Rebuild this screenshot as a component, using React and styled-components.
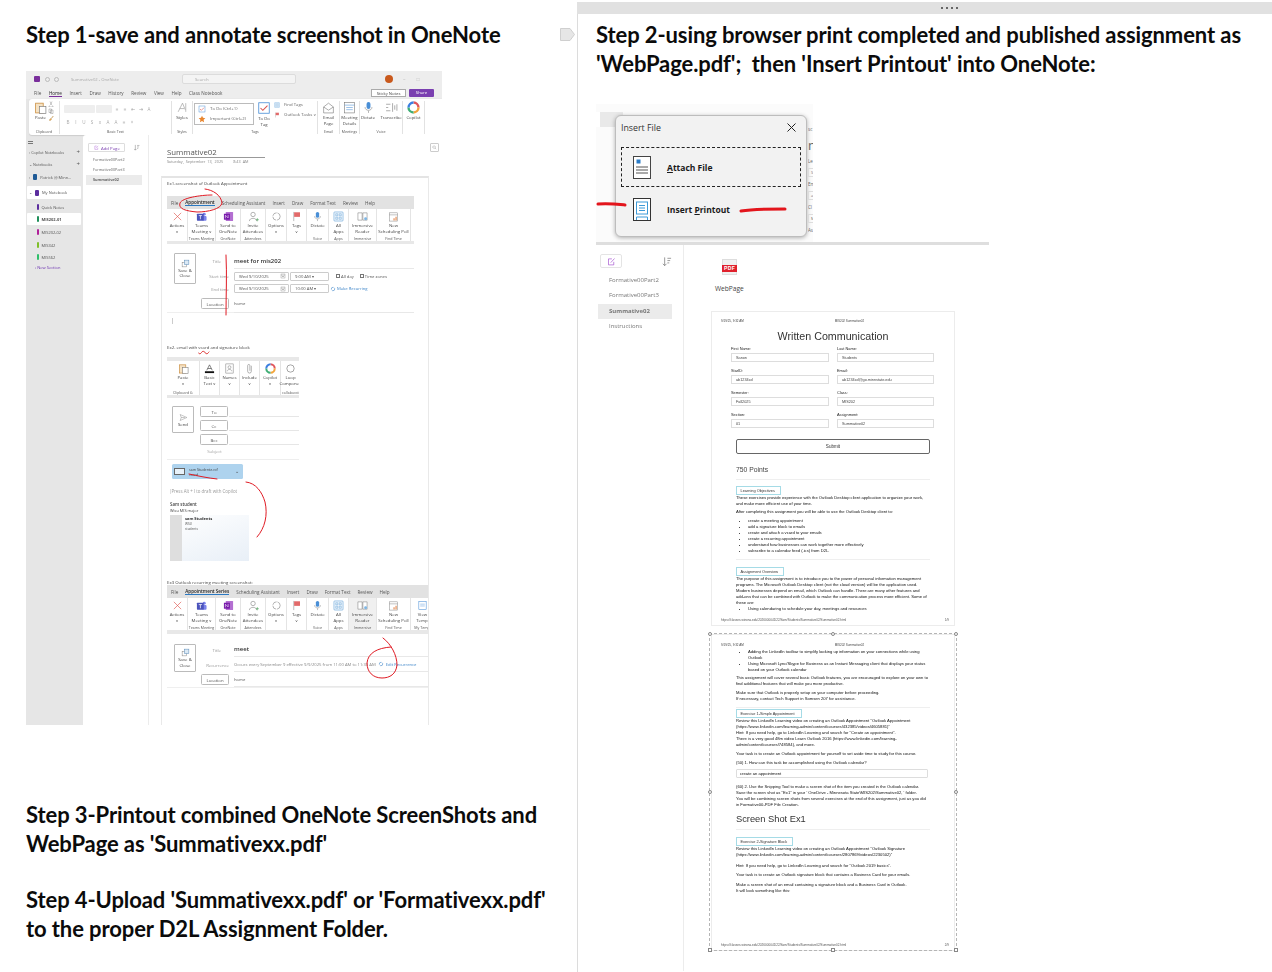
import React from "react";
import styled, { createGlobalStyle } from "styled-components";

const GlobalStyle = createGlobalStyle`
  html, body {
    margin: 0;
    width: 1272px;
    height: 972px;
    overflow: hidden;
    background: #fff;
  }
  * { box-sizing: border-box; }
`;

const Page = styled.div`
  display: grid;
  grid-template-columns: 577px 695px;
  width: 1272px;
  height: 972px;
  overflow: hidden;
  font-family: Lato, "Liberation Sans", sans-serif;
`;

const LeftPane = styled.section`
  padding: 20px 0 0 26px;
`;

const StepHead = styled.div`
  display: flex;
  justify-content: space-between;
  align-items: center;
  padding-right: 2px;
  height: 29px;
`;

const StepText = styled.div`
  font-size: 22px;
  font-weight: 700;
  line-height: 29px;
  color: #0b0b0b;
  letter-spacing: -0.1px;
  white-space: pre;
  margin-top: ${(p) => p.$mt || 0}px;
`;

const RightPane = styled.section`
  position: relative;
  border-left: 1.5px solid #dcdcdc;
  margin-top: 2px;
`;

const TopBar = styled.div`
  height: 12px;
  margin-left: -1px;
  background: #e1e1e1;
  display: flex;
  justify-content: flex-end;
  align-items: center;
  gap: 3px;
  padding-right: 314px;
  i {
    width: 2px;
    height: 2px;
    background: #666;
  }
`;

const RightBody = styled.div`
  padding: 6px 0 0 18px;
`;

/* ---------- OneNote screenshot ---------- */

const ScreenFrame = styled.div`
  position: relative;
  width: 416px;
  height: 654px;
  margin-top: 22px;
  background: #e6e6e6;
  display: flex;
  flex-direction: column;
  overflow: hidden;
  filter: blur(0.3px);
  font-family: "Open Sans", "Liberation Sans", sans-serif;
  font-size: 4.3px;
  color: #444;
`;

const TitleBar = styled.div`
  height: 16px;
  flex: none;
  display: flex;
  align-items: center;
  padding: 0 8px;
  background: #ededed;
`;

const AppBadge = styled.span`
  width: 6px;
  height: 6px;
  border-radius: 1px;
  background: #7a2f9c;
  flex: none;
`;

const TitleTool = styled.span`
  width: ${(p) => p.$w || 5}px;
  margin-left: ${(p) => p.$ml || 4}px;
  height: 5px;
  border-radius: 50%;
  border: 0.5px solid #bbb;
  flex: none;
`;

const TitleName = styled.span`
  margin-left: 12px;
  width: 111px;
  color: #aaa;
  font-size: 4.2px;
`;

const SearchBox = styled.div`
  width: 114px;
  height: 10px;
  border-radius: 2px;
  border: 0.5px solid #dcdcdc;
  background: #f4f4f4;
  padding-left: 12px;
  line-height: 9px;
  color: #aaa;
`;

const Avatar = styled.span`
  width: 8px;
  height: 8px;
  border-radius: 50%;
  background: #c9591c;
  margin-left: 89px;
  flex: none;
`;

const WindowMark = styled.span`
  margin-left: ${(p) => p.$ml}px;
  color: #bbb;
  font-size: 5px;
`;

const AppTabs = styled.div`
  height: 12px;
  flex: none;
  display: flex;
  align-items: center;
  gap: 7.6px;
  padding: 0 8px;
  background: #ededed;
  color: #444;
  font-size: 4.6px;
  white-space: nowrap;
`;

const AppTab = styled.span`
  border-bottom: ${(p) => (p.$on ? "0.8px solid #7a2f9c" : "none")};
  color: ${(p) => (p.$on ? "#222" : "#555")};
`;

const StickyButton = styled.span`
  margin-left: auto;
  width: 35px;
  height: 8px;
  border: 0.5px solid #aaa;
  background: #fff;
  text-align: center;
  font-size: 4.2px;
  line-height: 7px;
`;

const ShareButton = styled.span`
  width: 25px;
  height: 8px;
  margin-left: -4.6px;
  border-radius: 1px;
  background: #7a3fb0;
  color: #fff;
  font-size: 4.2px;
  text-align: center;
  line-height: 8px;
`;

const AppRibbon = styled.div`
  height: 36px;
  flex: none;
  margin: 0 -4px 0 3px;
  background: #fff;
  border-radius: 3px;
  display: flex;
  box-shadow: 0 0.5px 1px #ccc;
`;

const AppGroup = styled.div`
  width: ${(p) => p.$w}px;
  flex: none;
  border-right: 0.5px solid #e2e2e2;
  margin: 2px 0 1px;
  display: flex;
  flex-direction: column;
  align-items: center;
`;

const GroupBody = styled.div`
  flex: 1;
  align-self: stretch;
  display: flex;
  justify-content: center;
  gap: ${(p) => p.$gap || 2}px;
  text-align: center;
  line-height: 5.6px;
`;

const GroupName = styled.div`
  font-size: 3.6px;
  line-height: 5px;
  color: #555;
  white-space: nowrap;
`;

const ToolItem = styled.div`
  width: ${(p) => p.$w || 22}px;
  flex: none;
  display: flex;
  flex-direction: column;
  align-items: center;
  svg {
    flex: none;
    margin-bottom: ${(p) => p.$gap ?? 1}px;
  }
`;

const ClipStack = styled.div`
  display: flex;
  flex-direction: column;
  gap: 1px;
`;

const FontBoxes = styled.div`
  width: 104px;
  display: grid;
  grid-template-rows: 9px 10px;
  row-gap: 4px;
  padding-top: 3px;
`;

const FontRow = styled.div`
  display: flex;
  gap: 1px;
  align-items: center;
`;

const FontField = styled.span`
  width: ${(p) => p.$w}px;
  height: 8px;
  border-radius: 1px;
  background: #eee;
`;

const FontGlyph = styled.span`
  width: 5px;
  margin-left: 2px;
  text-align: center;
  color: #aaa;
  font-size: 4.6px;
  line-height: 6px;
`;

const TagsBox = styled.div`
  width: 60px;
  height: 22px;
  margin-top: 2px;
  border: 0.5px solid #bbb;
  display: flex;
  flex-direction: column;
  justify-content: space-around;
  padding-left: 3px;
  text-align: left;
`;

const TagLine = styled.div`
  display: flex;
  align-items: center;
  gap: 4px;
  color: #666;
  white-space: nowrap;
`;

const SideBySide = styled.div`
  text-align: left;
  display: flex;
  flex-direction: column;
  gap: 4px;
  padding-top: 1px;
`;

const AppBody = styled.div`
  flex: 1;
  display: flex;
  min-height: 0;
`;

const NotebookBar = styled.aside`
  width: 57px;
  flex: none;
  padding-top: 4px;
  display: flex;
  flex-direction: column;
  color: #555;
  white-space: nowrap;
`;

const MenuGlyph = styled.div`
  width: 5px;
  height: 3px;
  margin: 2px 0 2px 2px;
  border-top: 0.6px solid #777;
  border-bottom: 0.6px solid #777;
`;

const NavRow = styled.div`
  height: ${(p) => p.$h || 12}px;
  margin: 0 2px 0 1px;
  margin-top: ${(p) => p.$mt || 0}px;
  padding-left: ${(p) => p.$pl || 2}px;
  display: flex;
  align-items: center;
  gap: 3px;
  border-radius: 1px;
  background: ${(p) => (p.$on ? "#fff" : "transparent")};
  font-weight: ${(p) => (p.$bold ? 700 : 400)};
  color: ${(p) => p.$color || "#555"};
  font-size: ${(p) => p.$size || 4}px;
  b {
    margin-left: auto;
    margin-right: 1px;
    font-weight: 400;
    font-size: 6px;
  }
`;

const NotebookTab = styled.span`
  width: ${(p) => p.$w || 1.5}px;
  height: ${(p) => p.$h || 6}px;
  border-radius: 1px;
  background: ${(p) => p.$color};
  flex: none;
`;

const PagesBar = styled.aside`
  width: 66px;
  flex: none;
  background: #fff;
  border-right: 1px solid #ececec;
  border-top-left-radius: 3px;
  padding: 8px 0 0 3px;
`;

const AddPage = styled.div`
  display: flex;
  justify-content: space-between;
  align-items: center;
  padding-right: 8px;
  margin: 0 0 3px 2px;
  span {
    width: 37px;
    height: 9px;
    border: 0.5px solid #ddd;
    border-radius: 1px;
    color: #7a3fb0;
    line-height: 8px;
    padding-left: 5px;
    display: flex;
    gap: 2px;
    align-items: center;
  }
`;

const PageEntry = styled.div`
  height: 10px;
  width: 56px;
  padding-left: 7px;
  line-height: 10px;
  color: #666;
  font-size: 3.8px;
  background: ${(p) => (p.$on ? "#ebebeb" : "transparent")};
  font-weight: ${(p) => (p.$on ? 700 : 400)};
`;

const NoteMain = styled.main`
  flex: 1;
  background: #fff;
  padding-top: 12px;
  position: relative;
`;

const NoteTitle = styled.div`
  margin-left: 18px;
  width: 98px;
  font-size: 7.8px;
  line-height: 10px;
  color: #555;
  border-bottom: 0.6px solid #999;
`;

const NoteDate = styled.div`
  margin-left: 18px;
  line-height: 5px;
  margin-top: 1px;
  font-size: 3.8px;
  color: #888;
  word-spacing: 1px;
`;

const NoteCard = styled.div`
  margin: 12.4px 0 0 12px;
  width: 268px;
  height: 560px;
  border: 1px solid #e9e9e9;
  border-top: 2px solid #e4e4e4;
  padding: 2px 0 0 5px;
`;

const NoteCaption = styled.div`
  font-size: 4.3px;
  line-height: 6px;
  color: #444;
  margin-top: ${(p) => p.$mt || 0}px;
`;

const Wavy = styled.span`
  text-decoration: underline wavy #d33 0.4px;
`;

const RibbonWrap = styled.div`
  width: ${(p) => p.$w}px;
  margin-top: ${(p) => p.$mt || 0}px;
  overflow: hidden;
`;

const OutlookTabs = styled.div`
  height: 13px;
  background: #e2e2e2;
  display: flex;
  align-items: center;
  gap: 7px;
  padding-left: 4px;
  white-space: nowrap;
  color: #555;
  font-size: 4.6px;
`;

const OutlookTab = styled.span`
  color: ${(p) => (p.$on ? "#222" : "#555")};
  font-weight: ${(p) => (p.$on ? 600 : 400)};
  border-bottom: ${(p) => (p.$on ? "0.8px solid #2b79c2" : "none")};
`;

const OutlookTools = styled.div`
  height: ${(p) => p.$h || 32}px;
  display: flex;
  background: #fff;
`;

const OutlookGroup = styled.div`
  width: ${(p) => p.$w}px;
  flex: none;
  display: flex;
  flex-direction: column;
  align-items: center;
  padding-top: 2px;
  border-right: 0.5px solid #e4e4e4;
  text-align: center;
  line-height: 5.6px;
  background: ${(p) => (p.$hover ? "#f0f0f0" : "transparent")};
`;

const OutlookItems = styled.div`
  flex: 1;
  display: flex;
  gap: 1px;
  white-space: nowrap;
  justify-content: center;
`;

const OutlookStrip = styled.div`
  height: ${(p) => p.$h}px;
  background: #e8e8e8;
`;

const FormShell = styled.div`
  display: flex;
  margin-top: ${(p) => p.$mt || 0}px;
  width: ${(p) => p.$w || 247}px;
  padding-left: 7px;
  height: ${(p) => p.$h}px;
  border-bottom: ${(p) => (p.$edge ? "1px solid #efefef" : "none")};
`;

const SaveButton = styled.div`
  width: 22px;
  height: ${(p) => p.$h || 31}px;
  border: 0.6px solid #bbb;
  border-radius: 1px;
  display: flex;
  flex-direction: column;
  align-items: center;
  justify-content: center;
  text-align: center;
  line-height: 5.4px;
  flex: none;
  margin-top: ${(p) => p.$mt || 0}px;
`;

const FormGrid = styled.div`
  flex: 1;
  margin-left: 5px;
  display: grid;
  grid-template-columns: 29px 1fr;
  column-gap: 4px;
  grid-template-rows: ${(p) => p.$rows};
  align-items: center;
`;

const FormLabel = styled.div`
  text-align: right;
  color: #999;
  padding-right: ${(p) => p.$pr || 1}px;
  white-space: nowrap;
`;

const OutlineButton = styled.div`
  height: ${(p) => p.$h || 11}px;
  width: ${(p) => p.$w || 28}px;
  border: 0.6px solid #bbb;
  border-radius: 1.5px;
  text-align: center;
  line-height: ${(p) => (p.$h || 11) - 1}px;
  color: #555;
  background: #fff;
`;

const FieldLine = styled.div`
  display: flex;
  align-items: center;
  height: 100%;
  gap: ${(p) => p.$gap || 1}px;
  margin-left: ${(p) => p.$ml || 0}px;
  font-size: ${(p) => p.$size || 4.2}px;
  font-weight: ${(p) => (p.$bold ? 600 : 400)};
  color: ${(p) => p.$color || "#555"};
  border-bottom: ${(p) => (p.$line ? "1px solid #e8e8e8" : "none")};
  white-space: nowrap;
`;

const DropField = styled.span`
  width: ${(p) => p.$w}px;
  height: 9px;
  border: 0.5px solid #ccc;
  border-radius: 1px;
  padding: 0 2px 0 4px;
  display: flex;
  justify-content: space-between;
  align-items: center;
`;

const TickBox = styled.span`
  width: 4px;
  height: 4px;
  border: 0.4px solid #777;
  margin-left: ${(p) => p.$ml || 0}px;
`;

const LinkText = styled.span`
  color: #3f86c9;
`;

const CursorMark = styled.div`
  width: 1px;
  height: 6px;
  margin: 5px 0 0 5px;
  background: #ccc;
`;

const ComposeRow = styled.div`
  display: flex;
  gap: 6px;
  padding: 8px 0 0 5px;
  height: 62px;
  width: 132px;
  border-bottom: 0.6px solid #eee;
  overflow: hidden;
`;

const RecipientGrid = styled.div`
  flex: 1;
  display: grid;
  grid-template-columns: 29px 1fr;
  grid-auto-rows: 14px;
  align-items: start;
`;

const RecipientLine = styled.div`
  height: 11px;
  border-bottom: 0.6px solid #e6e6e6;
  margin-right: -8px;
`;

const SubjectLabel = styled.div`
  text-align: center;
  color: #aaa;
`;

const AttachmentChip = styled.div`
  width: 71px;
  height: 15px;
  margin: 4px 0 0 5px;
  border-radius: 1.5px;
  background: #aed3ee;
  display: flex;
  align-items: center;
  padding: 0 4px 0 2px;
  gap: 4px;
  line-height: 5px;
  font-size: 3.6px;
  span:last-child {
    margin-left: auto;
    font-size: 5px;
  }
`;

const ContactGlyph = styled.span`
  width: 11px;
  height: 7px;
  background: #e8f2fa;
  border: 0.5px solid #666;
`;

const DraftHint = styled.div`
  margin: 9px 0 0 2px;
  color: #999;
  font-size: 4.4px;
  line-height: 6px;
`;

const SignatureName = styled.div`
  margin: 7px 0 0 3px;
  color: #444;
  font-size: 4.4px;
  line-height: 6px;
  font-weight: ${(p) => (p.$bold ? 600 : 400)};
`;

const SignatureSub = styled(SignatureName)`
  margin-top: 1px;
  font-size: 3.9px;
`;

const BusinessCard = styled.div`
  width: 79px;
  height: 46px;
  margin: 1px 0 0 3px;
  background: linear-gradient(90deg, #dedede 0 12px, transparent 12px),
    linear-gradient(160deg, #fff, #e8eff7);
  padding: 1px 0 0 15px;
  font-size: 3.2px;
  line-height: 4.4px;
  color: #555;
  strong {
    display: block;
    font-size: 4px;
    line-height: 6px;
    color: #333;
  }
`;

const NoteTools = styled.div`
  position: absolute;
  top: 8px;
  right: 3px;
  width: 9px;
  height: 9px;
  border: 0.5px solid #ccc;
  border-radius: 1px;
  display: flex;
  align-items: center;
  justify-content: center;
`;

const InkLayer = styled.svg`
  position: absolute;
  inset: 0;
  width: 100%;
  height: 100%;
  pointer-events: none;
  overflow: visible;
`;

/* ---------- Insert file dialog ---------- */

const DialogShot = styled.div`
  position: relative;
  width: 217px;
  height: 138px;
  margin-top: 26px;
  padding: 11px 0 0 19px;
  display: flex;
  background: linear-gradient(90deg, #fff 4px, #e9e9e9 4px 27px, #fbfbfb 27px 100%) 0 8px / 100% 15px
      no-repeat,
    #fbfbfb;
  font-family: "Open Sans", "Liberation Sans", sans-serif;
`;

const Dialog = styled.div`
  width: 192px;
  height: 122px;
  border-radius: 6px;
  border: 1px solid #bdbdbd;
  background: #f2f2f2;
  box-shadow: 0 1px 4px rgba(0, 0, 0, 0.3);
  padding: 0 5px;
  flex: none;
`;

const DialogHead = styled.div`
  height: 23px;
  display: flex;
  align-items: center;
  justify-content: space-between;
  font-size: 8.8px;
  color: #333;
  padding-right: 5px;
`;

const ChoiceRow = styled.div`
  height: 40px;
  margin-top: ${(p) => p.$mt || 0}px;
  display: flex;
  align-items: center;
  padding-left: 11px;
  gap: 16px;
  border: ${(p) => (p.$focus ? "1px dashed #222" : "1px solid transparent")};
  font-size: 8.5px;
  font-weight: 700;
  color: #1a1a1a;
  u {
    text-underline-offset: 1px;
  }
`;

const Peek = styled.div`
  flex: 1;
  padding-top: 9px;
  display: flex;
  flex-direction: column;
  margin-left: 1px;
  overflow: hidden;
`;

const PeekText = styled.span`
  height: ${(p) => p.$h}px;
  line-height: ${(p) => p.$h}px;
  font-size: ${(p) => p.$size || 4.5}px;
  color: #666;
`;

const PeekField = styled.span`
  height: 9px;
  margin: 1px 0;
  border: 0.5px solid #ddd;
  border-right: none;
  font-size: 4px;
  line-height: 8px;
  padding-left: 2px;
  color: #777;
`;

const GreyRule = styled.div`
  width: 393px;
  height: 3px;
  background: #dedede;
`;

const NotebookSplit = styled.div`
  display: flex;
`;

const RightPages = styled.aside`
  width: 88px;
  flex: none;
  height: 726px;
  border-right: 1px solid #ececec;
  padding: 9px 0 0 2px;
  font-family: "Open Sans", "Liberation Sans", sans-serif;
  font-size: 6px;
  color: #777;
  filter: blur(0.2px);
`;

const RightAdd = styled.div`
  display: flex;
  justify-content: space-between;
  align-items: center;
  padding-right: 11px;
  margin: 0 0 5px 2px;
  span {
    width: 22px;
    height: 14px;
    border: 1px solid #e4e4e4;
    border-radius: 2px;
    display: flex;
    align-items: center;
    justify-content: center;
  }
`;

const RightEntry = styled.div`
  width: 74px;
  height: 15.4px;
  padding-left: 11px;
  line-height: 15.4px;
  background: ${(p) => (p.$on ? "#ebebeb" : "transparent")};
  font-weight: ${(p) => (p.$on ? 700 : 400)};
`;

const PrintColumn = styled.div`
  padding: 14px 0 0 27px;
  position: relative;
`;

const PdfIcon = styled.div`
  width: 15px;
  height: 16px;
  margin-left: 11px;
  position: relative;
  background: #f0f0f0;
  border: 0.5px solid #ddd;
`;

const PdfBand = styled.span`
  position: absolute;
  left: -1px;
  right: -1px;
  top: 5px;
  height: 7px;
  background: #e0202c;
  color: #fff;
  font: 700 5px/7px "Liberation Sans", sans-serif;
  text-align: center;
  letter-spacing: 0.4px;
`;

const PdfLabel = styled.div`
  margin: 9px 0 0 4px;
  font: 6.6px/9px "Open Sans", "Liberation Sans", sans-serif;
  color: #444;
`;

const PrintSheet = styled.article`
  position: relative;
  width: 244px;
  height: ${(p) => p.$h}px;
  margin-top: ${(p) => p.$mt}px;
  padding: ${(p) => p.$pt}px 24px 0;
  display: flex;
  flex-direction: column;
  border: 1px solid #ececec;
  border-bottom-width: 1.5px;
  font-family: "Liberation Sans", Arial, sans-serif;
  font-size: 4.15px;
  line-height: 6px;
  color: #111;
`;

const SheetBody = styled.div`
  flex: 1;
  min-height: 0;
  display: flex;
  flex-direction: column;
  filter: blur(0.22px);
`;

const PrintHead = styled.div`
  display: flex;
  margin: 0 -15px;
  height: 4px;
  font-size: 3px;
  line-height: 4px;
  color: #444;
  span:last-child {
    margin-left: 91px;
  }
`;

const DocTitle = styled.h1`
  margin: 7px 0 0;
  font-size: 10.7px;
  line-height: 13px;
  font-weight: 400;
  text-align: center;
  color: #333;
`;

const FieldGrid = styled.div`
  display: grid;
  grid-template-columns: 98px 97px;
  column-gap: 8px;
  row-gap: 5.5px;
  margin: 2.5px 0 0 -5px;
`;

const FieldLabel = styled.div`
  height: 5px;
  line-height: 5px;
  font-size: 3.9px;
  color: #222;
`;

const FieldInput = styled.div`
  height: 9px;
  margin-top: 2.5px;
  border: 0.6px solid #ddd;
  line-height: 8px;
  padding-left: 4px;
  font-size: 3.8px;
  color: #444;
`;

const SubmitButton = styled.div`
  width: 194px;
  height: 15px;
  margin-top: 11px;
  border: 1px solid #666;
  border-radius: 2px;
  text-align: center;
  line-height: 13px;
  font-size: 4.6px;
  color: #333;
`;

const PointsLine = styled.div`
  margin-top: 10.5px;
  font-size: 6.8px;
  line-height: 9px;
  color: #444;
`;

const Hairline = styled.hr`
  border: 0;
  height: 1px;
  margin: ${(p) => p.$mt}px 0 0;
  background: #efefef;
  width: 194px;
`;

const SectionTag = styled.div`
  width: ${(p) => p.$w}px;
  height: 9px;
  margin-top: ${(p) => p.$mt}px;
  border: 0.7px solid #a5dbe6;
  line-height: 8px;
  padding-left: 3.5px;
  font-size: 3.9px;
  color: #333;
  white-space: nowrap;
`;

const Para = styled.p`
  margin: ${(p) => p.$mt || 0}px 0 0;
  white-space: pre;
`;

const Bullets = styled.ul`
  margin: ${(p) => p.$mt || 0}px 0 0;
  padding: 0 0 0 12px;
  li {
    white-space: pre;
  }
`;

const AnswerBox = styled.div`
  width: 192px;
  height: 9px;
  margin-top: 3px;
  border: 0.6px solid #ddd;
  border-radius: 1px;
  padding-left: 3px;
  line-height: 8px;
`;

const SectionHead = styled.div`
  margin-top: 5px;
  font-size: 9.3px;
  line-height: 12px;
  color: #333;
`;

const PrintFoot = styled.div`
  margin: auto -15px 0;
  padding-bottom: 3px;
  height: 7px;
  line-height: 4px;
  font-size: 3.1px;
  color: #555;
  display: flex;
  justify-content: space-between;
  white-space: nowrap;
  span:last-child {
    font-size: 3px;
    margin-right: -4px;
  }
`;

const SelectBox = styled.div`
  position: absolute;
  top: -2px;
  left: -3px;
  right: -3px;
  bottom: -1px;
  border: 1px dashed #b5b5b5;
  pointer-events: none;
`;

const Handle = styled.span`
  position: absolute;
  width: 4px;
  height: 4px;
  background: #fff;
  border: 0.6px solid #888;
  border-radius: ${(p) => (p.$round ? "50%" : "0")};
  left: ${(p) => p.$x};
  top: ${(p) => p.$y};
  transform: translate(-50%, -50%);
`;

/* small drawn icons, all on a 12x12 box */
const drawings = {
  paste: (
    <>
      <rect x="1.5" y="2" width="7" height="9" fill="#f5e2c4" stroke="#c98a3a" strokeWidth=".7" />
      <rect x="5" y="5" width="6" height="6.5" fill="#fff" stroke="#777" strokeWidth=".6" />
    </>
  ),
  cut: <path d="M4 1l3 7M8 1L5 8M3 10a1.2 1.2 0 1 0 .01 0M9 10a1.2 1.2 0 1 0 .01 0" fill="none" stroke="#777" strokeWidth=".8" />,
  copy: <path d="M2 2h5v7H2zM5 4h5v7H5z" fill="#fff" stroke="#777" strokeWidth=".8" />,
  brush: <path d="M2 10l4-4 2 2-4 4zM7 5l3-3 1 1-3 3z" fill="#e8a94e" stroke="#999" strokeWidth=".4" />,
  cross: <path d="M2 2l8 8M10 2l-8 8" stroke="#e0554d" strokeWidth=".7" />,
  teams: (
    <>
      <circle cx="9" cy="3.5" r="1.6" fill="#7b83eb" />
      <rect x="7" y="5.5" width="4.5" height="5" rx="1" fill="#7b83eb" />
      <rect x="1" y="3" width="7.5" height="7.5" rx=".6" fill="#4b53bc" />
      <path d="M3 5h3.6M4.8 5v4" stroke="#fff" strokeWidth=".8" />
    </>
  ),
  onenote: (
    <>
      <rect x="3" y="1" width="8" height="10" rx=".6" fill="#b36fd1" />
      <rect x="1" y="3" width="6.5" height="6.5" fill="#7719aa" />
      <path d="M2.6 8V4.6l3 3V4.2" stroke="#fff" strokeWidth=".6" fill="none" />
    </>
  ),
  invite: (
    <>
      <circle cx="5.5" cy="3.8" r="2.4" fill="none" stroke="#777" strokeWidth=".6" />
      <path d="M1.5 11c0-4 8-4 8 0" fill="none" stroke="#777" strokeWidth=".6" />
      <path d="M8.5 9.5h3.4M10.2 7.8v3.4" stroke="#3c9a4d" strokeWidth=".6" />
    </>
  ),
  options: (
    <>
      <circle cx="6" cy="6" r="4" fill="none" stroke="#777" strokeWidth=".6" strokeDasharray="5.5 1" />
    </>
  ),
  flag: (
    <>
      <path d="M3 1v10" stroke="#888" strokeWidth=".6" />
      <path d="M3.4 1.4h6.4v5H3.4z" fill="#e26a6a" />
    </>
  ),
  mic: (
    <>
      <rect x="4.2" y="1" width="3.6" height="6.4" rx="1.8" fill="#4a8fd6" />
      <path d="M2.8 5.6c0 4 6.4 4 6.4 0M6 9v2" fill="none" stroke="#777" strokeWidth=".5" />
    </>
  ),
  apps: (
    <>
      <rect x="1" y="1" width="10" height="10" rx="1" fill="#eef5fb" stroke="#5d9fd8" strokeWidth=".6" />
      <path d="M3 3h2.2v2.2H3zM6.8 3H9v2.2H6.8zM3 6.8h2.2V9H3zM6.8 6.8H9V9H6.8z" fill="none" stroke="#5d9fd8" strokeWidth=".5" />
    </>
  ),
  reader: (
    <>
      <path d="M1 2h4.6v8H1zM6.4 2H11v8H6.4z" fill="#fff" stroke="#777" strokeWidth=".55" />
      <circle cx="9.4" cy="8.5" r="1.6" fill="#7db6e5" />
    </>
  ),
  poll: (
    <>
      <rect x="1.4" y="2" width="9" height="9" fill="#fff" stroke="#888" strokeWidth=".55" />
      <path d="M1.4 4.2h9" stroke="#888" strokeWidth=".55" />
      <path d="M6 10.4V8h1.2v2.4zM8.2 10.4V6.4h1.2v4z" fill="#e2854a" />
    </>
  ),
  template: (
    <>
      <rect x="2" y="1.5" width="8" height="9" fill="#fff" stroke="#4a8fd6" strokeWidth=".6" />
      <path d="M3.5 4.5h5M3.5 6.5h5" stroke="#4a8fd6" strokeWidth=".5" />
    </>
  ),
  mail: (
    <>
      <path d="M1.5 5.5L6 2l4.5 3.5V11h-9z" fill="#fff" stroke="#777" strokeWidth=".55" />
      <path d="M1.5 5.5L6 8.5l4.5-3" fill="none" stroke="#777" strokeWidth=".55" />
    </>
  ),
  meeting: (
    <>
      <rect x="1.5" y="1.5" width="9" height="9.5" fill="#fff" stroke="#777" strokeWidth=".55" />
      <path d="M1.5 3.8h9M3 6h6M3 8h6" stroke="#4a8fd6" strokeWidth=".5" />
    </>
  ),
  wave: <path d="M1 3h4M1 6h2M1 9h4M7 2v8M9 4v4M11 3v6" stroke="#777" strokeWidth=".55" />,
  copilot: (
    <>
      <path d="M6 1.4a4.6 4.6 0 0 1 4.6 4.6" fill="none" stroke="#e0555b" strokeWidth="2.2" />
      <path d="M10.6 6A4.6 4.6 0 0 1 6 10.6" fill="none" stroke="#f2a53c" strokeWidth="2.2" />
      <path d="M6 10.6A4.6 4.6 0 0 1 1.4 6" fill="none" stroke="#3fae75" strokeWidth="2.2" />
      <path d="M1.4 6A4.6 4.6 0 0 1 6 1.4" fill="none" stroke="#3c7fe0" strokeWidth="2.2" />
    </>
  ),
  styles: <path d="M2 10L6 2l2.5 6M3.4 7h4M9 2v8" fill="none" stroke="#999" strokeWidth=".6" />,
  tick: (
    <>
      <rect x="1.5" y="1.5" width="9" height="9" fill="#fff" stroke="#4a8fd6" strokeWidth=".7" />
      <path d="M3 6l2 2 4-4" fill="none" stroke="#d8534f" strokeWidth=".9" />
    </>
  ),
  star: <path d="M6 1l1.5 3.3 3.5.4-2.6 2.4.7 3.6L6 8.9l-3.1 1.8.7-3.6L1 4.7l3.5-.4z" fill="#e8852e" />,
  save: (
    <>
      <rect x="1.5" y="4.5" width="6" height="6" fill="#fff" stroke="#777" strokeWidth=".6" />
      <rect x="4.5" y="1.5" width="6" height="6" fill="#dbe9f5" stroke="#4a7fb0" strokeWidth=".6" />
    </>
  ),
  send: <path d="M1.5 2l9 4-9 4 1.5-4zM3 6h5" fill="#fff" stroke="#777" strokeWidth=".55" />,
  basic: (
    <>
      <path d="M3 8l3-6 3 6M4 6h4" fill="none" stroke="#444" strokeWidth=".7" />
      <rect x="1" y="9" width="10" height="2" fill="#111" />
    </>
  ),
  names: (
    <>
      <rect x="2" y="1" width="8" height="10" fill="#fff" stroke="#777" strokeWidth=".55" />
      <circle cx="6" cy="4.6" r="1.6" fill="none" stroke="#777" strokeWidth=".55" />
      <path d="M3.5 9c0-2.6 5-2.6 5 0" fill="none" stroke="#777" strokeWidth=".55" />
    </>
  ),
  clip: <path d="M8 3v6a2 2 0 0 1-4 0V2.8a1.2 1.2 0 0 1 2.4 0V8.5" fill="none" stroke="#777" strokeWidth=".6" />,
  loop: <circle cx="6" cy="6" r="4" fill="none" stroke="#777" strokeWidth=".7" />,
  recur: <circle cx="6" cy="6" r="3.4" fill="none" stroke="#3f86c9" strokeWidth="1.2" strokeDasharray="7 1.4" />,
  cal: (
    <>
      <rect x="2" y="2" width="8" height="8" fill="none" stroke="#777" strokeWidth=".7" />
      <path d="M2 4.4h8" stroke="#777" strokeWidth=".7" />
      <rect x="5" y="6" width="2" height="2" fill="#777" />
    </>
  ),
  sort: <path d="M4 1.5v9M2 8.5l2 2 2-2M7 2.5h4M7 5h3M7 7.5h2" fill="none" stroke="#777" strokeWidth=".8" />,
  add: (
    <>
      <path d="M9 6.5V10.5H2v-8h4.5" fill="none" stroke="#a24fd0" strokeWidth=".9" />
      <path d="M5 7.5L10 2" stroke="#a24fd0" strokeWidth=".9" />
    </>
  ),
  search: <path d="M5 2a3 3 0 1 0 .01 0M7.2 7.2L10 10" fill="none" stroke="#777" strokeWidth=".9" />,
};

const Draw = ({ name, size = 12 }) => (
  <svg width={size} height={size} viewBox="0 0 12 12" aria-hidden="true">
    {drawings[name]}
  </svg>
);

const DocIcon = ({ tint }) => (
  <svg width="18" height="23" viewBox="0 0 18 23" aria-hidden="true">
    <rect x=".5" y=".5" width="17" height="22" fill="#fff" stroke={tint ? "#333" : "#444"} />
    {tint ? (
      <>
        <rect x="3.5" y="4" width="11" height="12" fill="none" stroke="#3c9ad8" />
        <path d="M6 7.5h6M6 10h6M6 12.5h6" stroke="#3c9ad8" />
        <path d="M3.5 22v-3h11v3" fill="none" stroke="#3c9ad8" />
      </>
    ) : (
      <>
        <rect x="3.5" y="3.5" width="4" height="4" fill="#2b7cc7" />
        <path d="M3 11h12M3 14h12M3 17h12" stroke="#555" />
      </>
    )}
  </svg>
);

const NoteTag = () => (
  <svg width="15" height="13" viewBox="0 0 15 13" aria-hidden="true">
    <path d="M.5.5h9.5l4.5 6-4.5 6H.5z" fill="#e6e6e6" stroke="#cfcfcf" />
  </svg>
);

const CloseX = () => (
  <svg width="9" height="9" viewBox="0 0 9 9" aria-hidden="true">
    <path d="M.5.5l8 8M8.5.5l-8 8" stroke="#222" strokeWidth="1" />
  </svg>
);

const appointmentGroups = [
  { w: 21, label: "", items: [{ icon: "cross", text: "Actions\n˅" }] },
  { w: 28, label: "Teams Meeting", items: [{ icon: "teams", text: "Teams\nMeeting ˅" }] },
  { w: 25, label: "OneNote", items: [{ icon: "onenote", text: "Send to\nOneNote" }] },
  { w: 25, label: "Attendees", items: [{ icon: "invite", text: "Invite\nAttendees" }] },
  { w: 21, label: "", items: [{ icon: "options", text: "Options\n˅" }] },
  { w: 20, label: "", items: [{ icon: "flag", text: "Tags\n˅" }] },
  { w: 22, label: "Voice", items: [{ icon: "mic", text: "Dictate" }] },
  { w: 20, label: "Apps", items: [{ icon: "apps", text: "All\nApps" }] },
  { w: 28, label: "Immersive", items: [{ icon: "reader", text: "Immersive\nReader" }] },
  { w: 34, label: "Find Time", items: [{ icon: "poll", text: "New\nScheduling Poll" }] },
];

const seriesGroups = [
  ...appointmentGroups.slice(0, 8),
  { ...appointmentGroups[8], hover: true },
  appointmentGroups[9],
  { w: 24, label: "My Templ", items: [{ icon: "template", text: "View\nTempl" }] },
];

const emailGroups = [
  { w: 33, label: "Clipboard    ⧉", items: [{ icon: "paste", text: "Paste\n˅" }] },
  { w: 20, label: "", items: [{ icon: "basic", text: "Basic\nText ˅" }] },
  { w: 20, label: "", items: [{ icon: "names", text: "Names\n˅" }] },
  { w: 20, label: "", items: [{ icon: "clip", text: "Include\n˅" }] },
  { w: 21, label: "", items: [{ icon: "copilot", text: "Copilot\n˅" }] },
  { w: 20, label: "collaborat", items: [{ icon: "loop", text: "Loop\nComponen" }] },
];

const Pre = styled.span`
  white-space: pre;
`;

const OutlookRibbon = ({ groups, height }) => (
  <OutlookTools $h={height}>
    {groups.map((g, i) => (
      <OutlookGroup key={i} $w={g.w} $hover={g.hover}>
        <OutlookItems>
          {g.items.map((item) => (
            <ToolItem key={item.text} $w={g.w - 1}>
              <Draw name={item.icon} size={11} />
              <Pre>{item.text}</Pre>
            </ToolItem>
          ))}
        </OutlookItems>
        <GroupName>{g.label || "\u00a0"}</GroupName>
      </OutlookGroup>
    ))}
  </OutlookTools>
);

const TabsRow = ({ tabs, active }) => (
  <OutlookTabs>
    {tabs.map((t) => (
      <OutlookTab key={t} $on={t === active}>
        {t}
      </OutlookTab>
    ))}
  </OutlookTabs>
);

const OneNoteShot = () => (
  <ScreenFrame>
    <TitleBar>
      <AppBadge />
      <TitleTool $ml={5} />
      <TitleTool />
      <TitleName>Summative02 - OneNote</TitleName>
      <SearchBox>Search</SearchBox>
      <Avatar />
      <WindowMark $ml={10}>–</WindowMark>
      <WindowMark $ml={11}>□</WindowMark>
    </TitleBar>
    <AppTabs>
      <AppTab>File</AppTab>
      <AppTab $on>Home</AppTab>
      <AppTab>Insert</AppTab>
      <AppTab>Draw</AppTab>
      <AppTab>History</AppTab>
      <AppTab>Review</AppTab>
      <AppTab>View</AppTab>
      <AppTab>Help</AppTab>
      <AppTab>Class Notebook</AppTab>
      <StickyButton>Sticky Notes</StickyButton>
      <ShareButton>Share</ShareButton>
    </AppTabs>
    <AppRibbon>
      <AppGroup $w={31}>
        <GroupBody $gap={1}>
          <ToolItem $w={13}>
            <Draw name="paste" size={13} />
            Paste
          </ToolItem>
          <ClipStack>
            <Draw name="cut" size={6} />
            <Draw name="copy" size={6} />
            <Draw name="brush" size={6} />
          </ClipStack>
        </GroupBody>
        <GroupName>Clipboard</GroupName>
      </AppGroup>
      <AppGroup $w={112}>
        <GroupBody>
          <FontBoxes>
            <FontRow>
              <FontField $w={31} />
              <FontField $w={16} />
              <FontGlyph>≡</FontGlyph>
              <FontGlyph>≡</FontGlyph>
              <FontGlyph>⇤</FontGlyph>
              <FontGlyph>⇥</FontGlyph>
              <FontGlyph>A</FontGlyph>
            </FontRow>
            <FontRow>
              <FontGlyph>B</FontGlyph>
              <FontGlyph>I</FontGlyph>
              <FontGlyph>U</FontGlyph>
              <FontGlyph>S</FontGlyph>
              <FontGlyph>x</FontGlyph>
              <FontGlyph>A</FontGlyph>
              <FontGlyph>A</FontGlyph>
              <FontGlyph>≡</FontGlyph>
              <FontGlyph>×</FontGlyph>
            </FontRow>
          </FontBoxes>
        </GroupBody>
        <GroupName>Basic Text</GroupName>
      </AppGroup>
      <AppGroup $w={21}>
        <GroupBody>
          <ToolItem $w={14}>
            <Draw name="styles" size={13} />
            Styles
          </ToolItem>
        </GroupBody>
        <GroupName>Styles</GroupName>
      </AppGroup>
      <AppGroup $w={125}>
        <GroupBody $gap={3}>
          <TagsBox>
            <TagLine>
              <Draw name="tick" size={8} />
              To Do (Ctrl+1)
            </TagLine>
            <TagLine>
              <Draw name="star" size={8} />
              Important (Ctrl+2)
            </TagLine>
          </TagsBox>
          <ToolItem $w={14}>
            <Draw name="tick" size={14} />
            To Do
            <br />
            Tag
          </ToolItem>
          <SideBySide>
            <TagLine>
              <Draw name="apps" size={6} />
              Find Tags
            </TagLine>
            <TagLine>
              <Draw name="flag" size={6} />
              Outlook Tasks ˅
            </TagLine>
          </SideBySide>
        </GroupBody>
        <GroupName>Tags</GroupName>
      </AppGroup>
      <AppGroup $w={22}>
        <GroupBody>
          <ToolItem $w={20}>
            <Draw name="mail" size={13} />
            Email
            <br />
            Page
          </ToolItem>
        </GroupBody>
        <GroupName>Email</GroupName>
      </AppGroup>
      <AppGroup $w={20}>
        <GroupBody>
          <ToolItem $w={20}>
            <Draw name="meeting" size={13} />
            Meeting
            <br />
            Details
          </ToolItem>
        </GroupBody>
        <GroupName>Meetings</GroupName>
      </AppGroup>
      <AppGroup $w={43}>
        <GroupBody $gap={0}>
          <ToolItem $w={18}>
            <Draw name="mic" size={13} />
            Dictate
          </ToolItem>
          <ToolItem $w={24}>
            <Draw name="wave" size={13} />
            Transcribe
          </ToolItem>
        </GroupBody>
        <GroupName>Voice</GroupName>
      </AppGroup>
      <AppGroup $w={22}>
        <GroupBody>
          <ToolItem $w={20}>
            <Draw name="copilot" size={13} />
            Copilot
          </ToolItem>
        </GroupBody>
      </AppGroup>
    </AppRibbon>
    <AppBody>
      <NotebookBar>
        <MenuGlyph />
        <NavRow $size={3.8}>
          › Copilot Notebooks<b>+</b>
        </NavRow>
        <NavRow $size={3.8}>
          ⌄ Notebooks<b>+</b>
        </NavRow>
        <NavRow $h={14}>
          › <NotebookTab $w={4} $h={6} $color="#1f5a96" /> Patrick @ Minn...
        </NavRow>
        <NavRow $on $h={13} $mt={2}>
          ⌄ <NotebookTab $w={4} $h={6} $color="#5b2d9e" /> My Notebook
        </NavRow>
        <NavRow $h={12} $pl={10} $mt={2}>
          <NotebookTab $color="#5b2d9e" /> Quick Notes
        </NavRow>
        <NavRow $on $h={12} $pl={10} $bold>
          <NotebookTab $color="#1f8f5a" /> MIS202-01
        </NavRow>
        <NavRow $h={14} $pl={10}>
          <NotebookTab $color="#b0209a" /> MIS202-02
        </NavRow>
        <NavRow $h={12} $pl={10}>
          <NotebookTab $color="#7fbf2a" /> MIS342
        </NavRow>
        <NavRow $h={12} $pl={10}>
          <NotebookTab $color="#2fbf6a" /> MIS562
        </NavRow>
        <NavRow $h={8} $pl={7} $color="#6a2fb0">
          + New Section
        </NavRow>
      </NotebookBar>
      <PagesBar>
        <AddPage>
          <span>
            <Draw name="add" size={5} />
            Add Page
          </span>
          <Draw name="sort" size={7} />
        </AddPage>
        <PageEntry>Formative00Part2</PageEntry>
        <PageEntry>Formative00Part3</PageEntry>
        <PageEntry $on>Summative02</PageEntry>
      </PagesBar>
      <NoteMain>
        <NoteTools>
          <Draw name="search" size={5} />
        </NoteTools>
        <NoteTitle>Summative02</NoteTitle>
        <NoteDate>Saturday, September 13, 2025 &nbsp;&nbsp;&nbsp; 8:43 AM</NoteDate>
        <NoteCard>
          <NoteCaption>Ex1-screenshot of Outlook Appointment</NoteCaption>
          <RibbonWrap $w={247} $mt={10}>
            <TabsRow
              tabs={["File", "Appointment", "Scheduling Assistant", "Insert", "Draw", "Format Text", "Review", "Help"]}
              active="Appointment"
            />
            <OutlookRibbon groups={appointmentGroups} />
            <OutlookStrip $h={3} />
          </RibbonWrap>
          <FormShell $mt={9} $h={60} $edge>
            <SaveButton>
              <Draw name="save" size={9} />
              Save &amp;
              <br />
              Close
            </SaveButton>
            <FormGrid $rows="16px 14px 11px 19px">
              <FormLabel $pr={9}>Title</FormLabel>
              <FieldLine $bold $size={6} $color="#333" $line>
                meet for mis202
              </FieldLine>
              <FormLabel>Start time</FormLabel>
              <FieldLine>
                <DropField $w={55}>
                  Wed 9/10/2025 <Draw name="cal" size={6} />
                </DropField>
                <DropField $w={39}>9:00 AM ▾</DropField>
                <TickBox $ml={6} /> All day
                <TickBox $ml={5} /> Time zones
              </FieldLine>
              <FormLabel>End time</FormLabel>
              <FieldLine>
                <DropField $w={55}>
                  Wed 9/10/2025 <Draw name="cal" size={6} />
                </DropField>
                <DropField $w={39}>10:00 AM ▾</DropField>
                <Draw name="recur" size={6} />
                <LinkText>Make Recurring</LinkText>
              </FieldLine>
              <OutlineButton>Location</OutlineButton>
              <FieldLine $line>home</FieldLine>
            </FormGrid>
          </FormShell>
          <CursorMark />
          <NoteCaption $mt={20}>
            Ex2- email with <Wavy>vcard</Wavy> and signature block
          </NoteCaption>
          <RibbonWrap $w={132} $mt={7}>
            <OutlookStrip $h={4} />
            <OutlookRibbon groups={emailGroups} height={34} />
            <OutlookStrip $h={3} />
          </RibbonWrap>
          <ComposeRow>
            <SaveButton $h={27}>
              <Draw name="send" size={9} />
              Send
            </SaveButton>
            <RecipientGrid>
              <OutlineButton>To</OutlineButton>
              <RecipientLine />
              <OutlineButton>Cc</OutlineButton>
              <RecipientLine />
              <OutlineButton>Bcc</OutlineButton>
              <RecipientLine />
              <SubjectLabel>Subject</SubjectLabel>
            </RecipientGrid>
          </ComposeRow>
          <AttachmentChip>
            <ContactGlyph />
            <span>
              sam Studente.vcf
              <br />
              vcard
            </span>
            <span>⌄</span>
          </AttachmentChip>
          <DraftHint>|Press Alt + I to draft with Copilot</DraftHint>
          <SignatureName $bold>Sam student</SignatureName>
          <SignatureSub>Wisu MIS major</SignatureSub>
          <BusinessCard>
            <strong>sam Students</strong>
            WSU
            <br />
            students
          </BusinessCard>
          <NoteCaption $mt={18}>Ex3 Outlook recurring meeting screenshot:</NoteCaption>
          <RibbonWrap $w={261} $mt={0}>
            <TabsRow
              tabs={["File", "Appointment Series", "Scheduling Assistant", "Insert", "Draw", "Format Text", "Review", "Help"]}
              active="Appointment Series"
            />
            <OutlookRibbon groups={seriesGroups} />
            <OutlookStrip $h={4} />
          </RibbonWrap>
          <FormShell $mt={8} $w={261} $h={46} $edge>
            <SaveButton $h={28} $mt={2}>
              <Draw name="save" size={9} />
              Save &amp;
              <br />
              Close
            </SaveButton>
            <FormGrid $rows="15px 15px 15px">
              <FormLabel $pr={9}>Title</FormLabel>
              <FieldLine $bold $size={6} $color="#333" $line>
                meet
              </FieldLine>
              <FormLabel>Recurrence</FormLabel>
              <FieldLine $line $color="#888" $gap={2}>
                Occurs every September 9 effective 9/9/2025 from 11:00 AM to 11:30 AM
                <Draw name="recur" size={6} />
                <LinkText>Edit Recurrence</LinkText>
              </FieldLine>
              <OutlineButton>Location</OutlineButton>
              <FieldLine $line>home</FieldLine>
            </FormGrid>
          </FormShell>
        </NoteCard>
      </NoteMain>
    </AppBody>
    <InkLayer viewBox="26 71 416 654">
      <g fill="none" stroke="#e01b24" strokeWidth="1" strokeLinecap="round">
        <path d="M205 189C213 190 221 195 222 203C221 209 208 212 197 212C186 211 178 209 180 203C182 198 200 195 212 195" />
        <path d="M226 255C227 275 226 295 226 315" />
        <path d="M189 474C198 476 208 478 217 479" />
        <path d="M246 482C256 483 262 492 265 502C268 515 265 528 257 537" />
        <path d="M383 638C391 644 397 655 397 665C396 674 390 678 382 678C373 678 367 672 367 663C368 653 377 648 391 647" />
      </g>
    </InkLayer>
  </ScreenFrame>
);

const InsertFileShot = () => (
  <DialogShot>
    <Dialog>
      <DialogHead>
        Insert File
        <CloseX />
      </DialogHead>
      <ChoiceRow $focus $mt={8}>
        <DocIcon />
        <span>
          <u>A</u>ttach File
        </span>
      </ChoiceRow>
      <ChoiceRow $mt={2}>
        <DocIcon tint />
        <span>
          Insert <u>P</u>rintout
        </span>
      </ChoiceRow>
    </Dialog>
    <Peek>
      <PeekText $h={11}>sc</PeekText>
      <PeekText $h={20} $size={13}>m</PeekText>
      <PeekText $h={12}>Le</PeekText>
      <PeekField>S</PeekField>
      <PeekText $h={12}>Em</PeekText>
      <PeekField>a</PeekField>
      <PeekText $h={12}>Cl</PeekText>
      <PeekField>M</PeekField>
      <PeekText $h={12}>As</PeekText>
    </Peek>
    <InkLayer viewBox="0 0 217 138">
      <g fill="none" stroke="#e3151c" strokeWidth="3" strokeLinecap="round">
        <path d="M2 100C12 99 20 100 29 101" />
        <path d="M145 107C158 105 172 105 189 105" />
      </g>
    </InkLayer>
  </DialogShot>
);

const FormFields = [
  ["First Name:", "Sanon"],
  ["Last Name:", "Students"],
  ["StarID:", "ab1234cd"],
  ["Email:", "ab1234cd@go.minnstate.edu"],
  ["Semester:", "Fall2025"],
  ["Class:", "MIS202"],
  ["Section:", "01"],
  ["Assignment:", "Summative02"],
];

const handles = [
  ["0%", "0%", true],
  ["50%", "0%", true],
  ["100%", "0%", true],
  ["0%", "50%", true],
  ["100%", "50%", true],
  ["0%", "100%", false],
  ["50%", "100%", false],
  ["100%", "100%", false],
];

const PrintPageOne = () => (
  <PrintSheet $h={315} $mt={18} $pt={7}>
    <SheetBody>
      <PrintHead>
        <span>9/19/25, 9:32 AM</span>
        <span>MIS202 Summative02</span>
      </PrintHead>
      <DocTitle>Written Communication</DocTitle>
      <FieldGrid>
        {FormFields.map(([label, value]) => (
          <div key={label}>
            <FieldLabel>{label}</FieldLabel>
            <FieldInput>{value}</FieldInput>
          </div>
        ))}
      </FieldGrid>
      <SubmitButton>Submit</SubmitButton>
      <PointsLine>750 Points</PointsLine>
      <Hairline $mt={5} />
      <SectionTag $w={45} $mt={6}>
        Learning Objectives
      </SectionTag>
      <Para>
        {"These exercises provide experience with the Outlook Desktop client application to organize your work,\nand make more efficient use of your time."}
      </Para>
      <Para $mt={2}>After completing this assignment you will be able to use the Outlook Desktop client to:</Para>
      <Bullets $mt={3}>
        <li>create a meeting appointment</li>
        <li>add a signature block to emails</li>
        <li>create and attach a vcard to your emails</li>
        <li>create a recurring appointment</li>
        <li>understand how businesses can work together more effectively</li>
        <li>subscribe to a calendar feed (.ics) from D2L.</li>
      </Bullets>
      <Hairline $mt={5} />
      <SectionTag $w={48} $mt={7.5}>
        Assignment Overview
      </SectionTag>
      <Para>
        {"The purpose of this assignment is to introduce you to the power of personal information management\nprograms. The Microsoft Outlook Desktop client (not the cloud version) will be the application used.\nModern businesses depend on email, which Outlook can handle. There are many other features and\nadd-ons that can be combined with Outlook to make the communication process more efficient. Some of\nthese are:"}
      </Para>
      <Bullets>
        <li>Using calendaring to schedule your day, meetings and resources</li>
      </Bullets>
      <PrintFoot>
        <span>https://classes.winona.edu/2026000041/22/Sam/Students/Summative02/Summative02.html</span>
        <span>1/9</span>
      </PrintFoot>
    </SheetBody>
  </PrintSheet>
);

const PrintPageTwo = () => (
  <PrintSheet $h={317} $mt={8} $pt={8}>
    <SheetBody>
      <PrintHead>
        <span>9/19/25, 9:32 AM</span>
        <span>MIS202 Summative02</span>
      </PrintHead>
      <Bullets $mt={2}>
        <li>{"Adding the LinkedIn toolbar to simplify looking up information on your connections while using\nOutlook"}</li>
        <li>{"Using Microsoft Lync/Skype for Business as an Instant Messaging client that displays your status\nbased on your Outlook calendar"}</li>
      </Bullets>
      <Para $mt={2}>
        {"This assignment will cover several basic Outlook features, you are encouraged to explore on your own to\nfind additional features that will make you more productive."}
      </Para>
      <Para $mt={3}>
        {"Make sure that Outlook is properly setup on your computer before proceeding.\nIf necessary, contact Tech Support in Somsen 207 for assistance."}
      </Para>
      <Hairline $mt={5} />
      <SectionTag $w={66} $mt={1}>
        Exercise 1-Simple Appointment
      </SectionTag>
      <Para>
        {"Review this LinkedIn Learning video on creating an Outlook Appointment \"Outlook Appointment\n(https://www.linkedin.com/learning-admin/content/courses/432385/videos/4605881)\"\nHint: If you need help, go to LinkedIn Learning and search for \"Create an appointment\".\nThere is a very good 48m video Learn Outlook 2016 (https://www.linkedin.com/learning-\nadmin/content/courses/748584), and more."}
      </Para>
      <Para $mt={3}>Your task is to create an Outlook appointment for yourself to set aside time to study for this course.</Para>
      <Para $mt={3}>(50) 1. How can this task be accomplished using the Outlook calendar?</Para>
      <AnswerBox>create an appointment</AnswerBox>
      <Para $mt={6}>
        {"(60) 2. Use the Snipping Tool to make a screen shot of the item you created in the Outlook calendar.\nSave the screen shot as \"Ex1\" in your ' OneDrive - Minnesota State\\MIS202\\Summative02, ' folder.\nYou will be combining screen shots from several exercises at the end of this assignment, just as you did\nin Formative00-PDF File Creation."}
      </Para>
      <SectionHead>Screen Shot Ex1</SectionHead>
      <Hairline $mt={4} />
      <SectionTag $w={57} $mt={7}>
        Exercise 2-Signature Block
      </SectionTag>
      <Para>
        {"Review this LinkedIn Learning video on creating an Outlook Appointment \"Outlook Signature\n(https://www.linkedin.com/learning-admin/content/courses/2807869/videos/2230502)\""}
      </Para>
      <Para $mt={5}>Hint: If you need help, go to LinkedIn Learning and search for "Outlook 2019 basics".</Para>
      <Para $mt={3}>Your task is to create an Outlook signature block that contains a Business Card for your emails.</Para>
      <Para $mt={3.5}>
        {"Make a screen shot of an email containing a signature block and a Business Card in Outlook.\nIt will look something like this:"}
      </Para>
      <PrintFoot>
        <span>https://classes.winona.edu/2026000041/22/Sam/Students/Summative02/Summative02.html</span>
        <span>2/9</span>
      </PrintFoot>
    </SheetBody>
    <SelectBox>
      {handles.map(([x, y, round]) => (
        <Handle key={x + y} $x={x} $y={y} $round={round} />
      ))}
    </SelectBox>
  </PrintSheet>
);

export default function App() {
  return (
    <>
      <GlobalStyle />
      <Page>
        <LeftPane>
          <StepHead>
            <StepText>Step 1-save and annotate screenshot in OneNote</StepText>
            <NoteTag />
          </StepHead>
          <OneNoteShot />
          <StepText $mt={75}>{"Step 3-Printout combined OneNote ScreenShots and\nWebPage as 'Summativexx.pdf'"}</StepText>
          <StepText $mt={27}>{"Step 4-Upload 'Summativexx.pdf' or 'Formativexx.pdf'\nto the proper D2L Assignment Folder."}</StepText>
        </LeftPane>
        <RightPane>
          <TopBar>
            <i />
            <i />
            <i />
            <i />
          </TopBar>
          <RightBody>
            <StepText>
              {"Step 2-using browser print completed and published assignment as\n'WebPage.pdf';  then 'Insert Printout' into OneNote:"}
            </StepText>
            <InsertFileShot />
            <GreyRule />
            <NotebookSplit>
              <RightPages>
                <RightAdd>
                  <span>
                    <Draw name="add" size={9} />
                  </span>
                  <Draw name="sort" size={11} />
                </RightAdd>
                <RightEntry>Formative00Part2</RightEntry>
                <RightEntry>Formative00Part3</RightEntry>
                <RightEntry $on>Summative02</RightEntry>
                <RightEntry>Instructions</RightEntry>
              </RightPages>
              <PrintColumn>
                <PdfIcon>
                  <PdfBand>PDF</PdfBand>
                </PdfIcon>
                <PdfLabel>WebPage</PdfLabel>
                <PrintPageOne />
                <PrintPageTwo />
              </PrintColumn>
            </NotebookSplit>
          </RightBody>
        </RightPane>
      </Page>
    </>
  );
}
